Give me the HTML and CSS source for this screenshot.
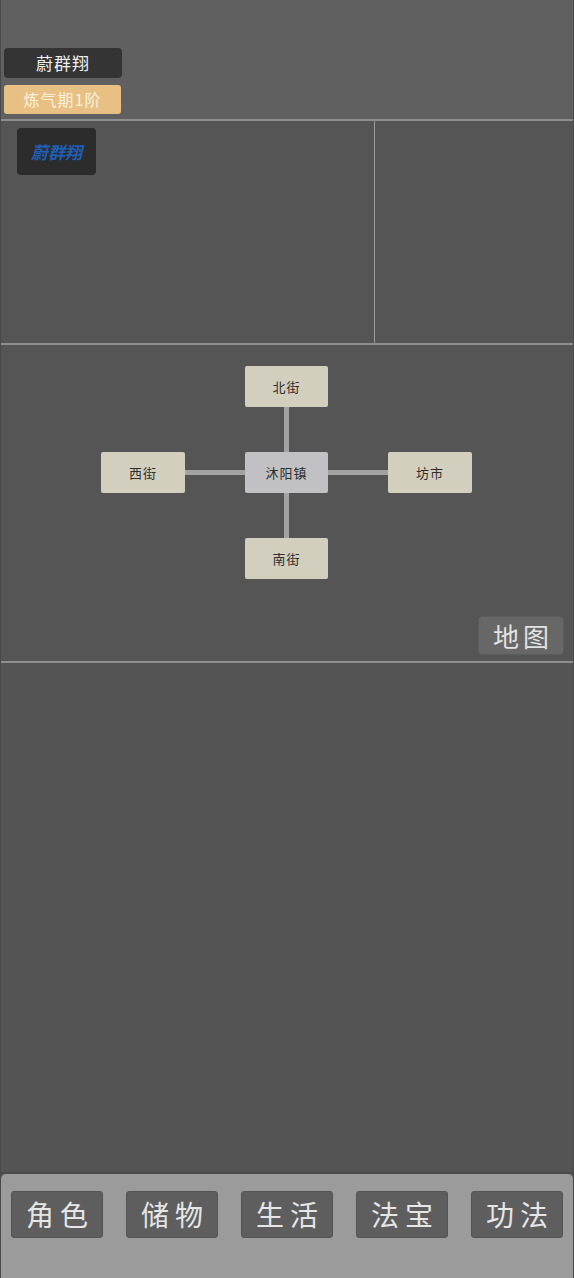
FILE: index.html
```html
<!DOCTYPE html>
<html lang="zh">
<head>
<meta charset="utf-8">
<link rel="stylesheet" href="styles.css">
</head>
<body>
<div class="app">
  <header class="top">
    <div class="name-pill">蔚群翔</div>
    <div class="realm-pill">炼气期1阶</div>
  </header>
  <div class="row">
    <section class="panel left">
      <div class="char-box">蔚群翔</div>
    </section>
    <section class="panel right"></section>
  </div>
  <section class="map">
    <div class="cross">
      <div class="node n-north">北街</div>
      <div class="vline v-top"></div>
      <div class="node n-west">西街</div>
      <div class="hline h-left"></div>
      <div class="node center n-center">沐阳镇</div>
      <div class="hline h-right"></div>
      <div class="node n-east">坊市</div>
      <div class="vline v-bottom"></div>
      <div class="node n-south">南街</div>
    </div>
    <div class="map-foot"><button class="map-btn">地图</button></div>
  </section>
  <section class="log"></section>
  <nav class="bottom">
    <button class="nav-btn">角色</button>
    <button class="nav-btn">储物</button>
    <button class="nav-btn">生活</button>
    <button class="nav-btn">法宝</button>
    <button class="nav-btn">功法</button>
  </nav>
</div>
</body>
</html>
```
FILE: styles.css
```css
* { box-sizing: border-box; }
html, body { margin: 0; padding: 0; }
body {
  background: #555555;
  font-family: "Noto Sans CJK SC", "Noto Sans", sans-serif;
}
.app {
  width: 574px;
  height: 1278px;
  display: flex;
  flex-direction: column;
  background: #555555;
  border-left: 1px solid #4a4a4a;
  border-right: 1px solid #4a4a4a;
}
.top {
  height: 121px;
  flex: none;
  background: #606060;
  padding: 48px 0 0 3px;
  display: flex;
  flex-direction: column;
  gap: 7px;
  border-bottom: 2px solid #8e8e8e;
}
.name-pill {
  width: 118px;
  height: 30px;
  background: #343434;
  border-radius: 4px;
  color: #efefef;
  font-size: 17px;
  line-height: 30px;
  text-align: center;
  letter-spacing: 1px;
}
.realm-pill {
  width: 117px;
  height: 29px;
  background: #e9c083;
  border-radius: 3px;
  color: #fbf1dc;
  font-size: 16px;
  line-height: 29px;
  text-align: center;
  letter-spacing: 1px;
}
.row {
  height: 224px;
  flex: none;
  display: flex;
  border-bottom: 2px solid #8e8e8e;
}
.panel { background: #555555; }
.left {
  width: 374px;
  border-right: 1px solid #9a9a9a;
  padding: 7px 0 0 16px;
}
.right { flex: 1; }
.char-box {
  width: 79px;
  height: 47px;
  background: #2c2c2c;
  border-radius: 4px;
  color: #1f5fb4;
  font-size: 17px;
  font-weight: bold;
  font-style: italic;
  line-height: 47px;
  text-align: center;
}
.map {
  height: 318px;
  flex: none;
  border-bottom: 2px solid #8e8e8e;
  display: flex;
  flex-direction: column;
  padding-top: 21px;
}
.cross {
  display: grid;
  grid-template-columns: 84px 60px 83px 60px 84px;
  grid-template-rows: 41px 45px 41px 45px 41px;
  margin-left: 100px;
  width: max-content;
}
.node {
  background: #d3cfbe;
  border-radius: 2px;
  color: #2e2e2e;
  font-size: 13px;
  display: flex;
  align-items: center;
  justify-content: center;
  letter-spacing: 1px;
}
.node.center { background: #c1c1c3; }
.n-north { grid-area: 1 / 3; }
.v-top { grid-area: 2 / 3; }
.n-west { grid-area: 3 / 1; }
.h-left { grid-area: 3 / 2; }
.n-center { grid-area: 3 / 3; }
.h-right { grid-area: 3 / 4; }
.n-east { grid-area: 3 / 5; }
.v-bottom { grid-area: 4 / 3; }
.n-south { grid-area: 5 / 3; }
.vline {
  justify-self: center;
  width: 5px;
  background: #a2a2a2;
}
.hline {
  align-self: center;
  height: 5px;
  background: #a2a2a2;
}
.map-foot {
  margin-top: auto;
  display: flex;
  justify-content: flex-end;
  padding: 0 9px 6px 0;
}
.map-btn {
  width: 86px;
  height: 39px;
  background: #676767;
  border: 1px solid #5c5c5c;
  border-radius: 4px;
  color: #e2e2e2;
  font-family: inherit;
  font-size: 26px;
  line-height: 37px;
  padding: 0;
  letter-spacing: 4px;
  text-indent: 4px;
}
.log {
  flex: 1;
  background: #545454;
  border-bottom: 2px solid #4a4a4a;
}
.bottom {
  height: 104px;
  flex: none;
  background: #9b9b9b;
  border-radius: 5px 5px 0 0;
  display: flex;
  gap: 23px;
  padding: 17px 0 0 10px;
  align-items: flex-start;
}
.nav-btn {
  width: 92px;
  height: 47px;
  background: #5e5e5e;
  border: 1px solid #555;
  border-radius: 3px;
  color: #e6e6e6;
  font-family: inherit;
  font-size: 28px;
  line-height: 45px;
  padding: 0;
  letter-spacing: 6px;
  text-indent: 6px;
}
```
